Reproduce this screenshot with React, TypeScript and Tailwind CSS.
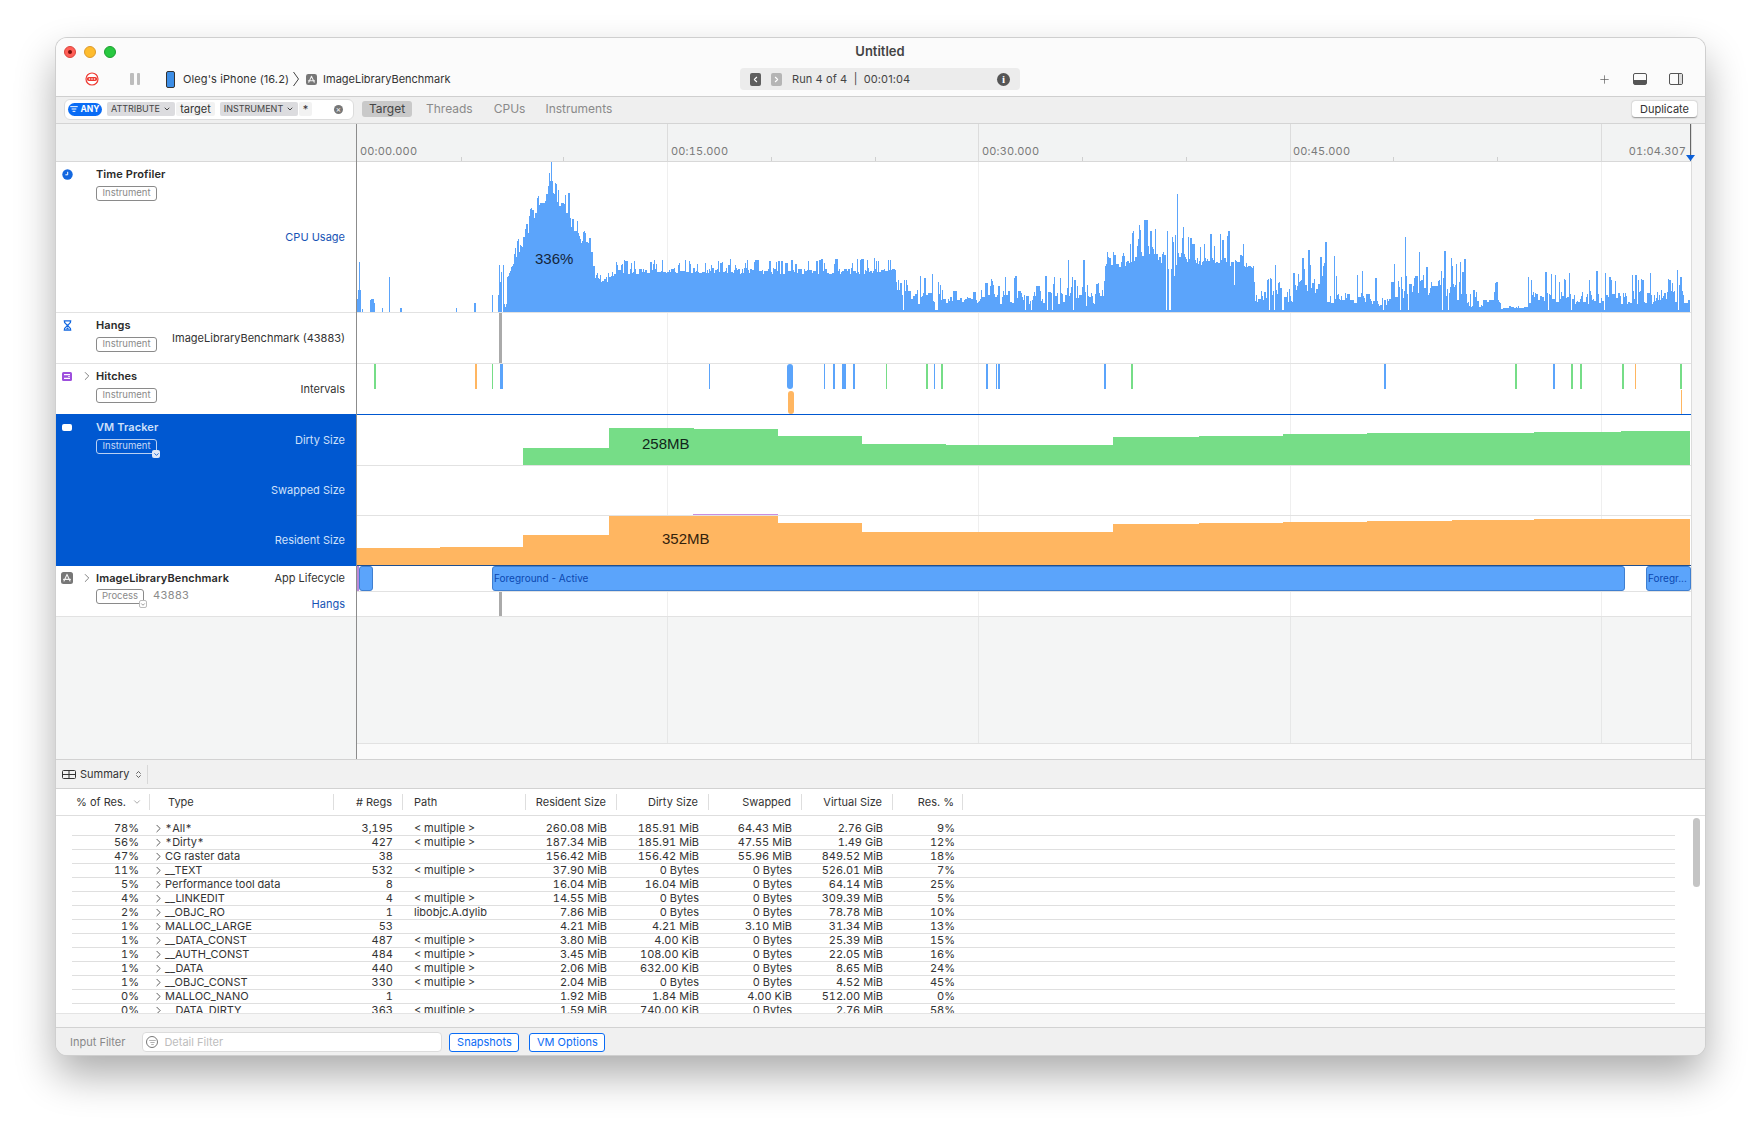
import { ChevronDown, ChevronRight, ChevronLeft, ChevronsUpDown, Plus, ListFilter } from "lucide-react";

type Row = [string, string, string, string, string, string, string, string, string];

const ROWS: Row[] = [
  ["78%", "*All*", "3,195", "< multiple >", "260.08 MiB", "185.91 MiB", "64.43 MiB", "2.76 GiB", "9%"],
  ["56%", "*Dirty*", "427", "< multiple >", "187.34 MiB", "185.91 MiB", "47.55 MiB", "1.49 GiB", "12%"],
  ["47%", "CG raster data", "38", "", "156.42 MiB", "156.42 MiB", "55.96 MiB", "849.52 MiB", "18%"],
  ["11%", "__TEXT", "532", "< multiple >", "37.90 MiB", "0 Bytes", "0 Bytes", "526.01 MiB", "7%"],
  ["5%", "Performance tool data", "8", "", "16.04 MiB", "16.04 MiB", "0 Bytes", "64.14 MiB", "25%"],
  ["4%", "__LINKEDIT", "4", "< multiple >", "14.55 MiB", "0 Bytes", "0 Bytes", "309.39 MiB", "5%"],
  ["2%", "__OBJC_RO", "1", "libobjc.A.dylib", "7.86 MiB", "0 Bytes", "0 Bytes", "78.78 MiB", "10%"],
  ["1%", "MALLOC_LARGE", "53", "", "4.21 MiB", "4.21 MiB", "3.10 MiB", "31.34 MiB", "13%"],
  ["1%", "__DATA_CONST", "487", "< multiple >", "3.80 MiB", "4.00 KiB", "0 Bytes", "25.39 MiB", "15%"],
  ["1%", "__AUTH_CONST", "484", "< multiple >", "3.45 MiB", "108.00 KiB", "0 Bytes", "22.05 MiB", "16%"],
  ["1%", "__DATA", "440", "< multiple >", "2.06 MiB", "632.00 KiB", "0 Bytes", "8.65 MiB", "24%"],
  ["1%", "__OBJC_CONST", "330", "< multiple >", "2.04 MiB", "0 Bytes", "0 Bytes", "4.52 MiB", "45%"],
  ["0%", "MALLOC_NANO", "1", "", "1.92 MiB", "1.84 MiB", "4.00 KiB", "512.00 MiB", "0%"],
  ["0%", "__DATA_DIRTY", "363", "< multiple >", "1.59 MiB", "740.00 KiB", "0 Bytes", "2.76 MiB", "58%"],
];

const GRAPH_X = 357;
const GRAPH_W = 1334;

// x, normal height, spike height (absolute page x)
const CPU_ENVELOPE: [number, number, number][] = [
  [507, 38, 50], [512, 48, 55], [518, 65, 75], [526, 80, 90], [532, 95, 110], [537, 115, 130],
  [545, 125, 137], [551, 130, 150], [558, 118, 128], [568, 108, 122], [574, 85, 100], [583, 70, 82],
  [590, 68, 82], [594, 40, 60], [595, 38, 42], [606, 28, 36], [610, 38, 45], [618, 43, 52],
  [895, 43, 54], [896, 17, 38], [950, 17, 38], [1061, 17, 36], [1066, 28, 52], [1083, 32, 54],
  [1086, 12, 28], [1103, 16, 30], [1105, 50, 60], [1125, 50, 62], [1135, 54, 90], [1151, 68, 97],
  [1163, 52, 85], [1177, 62, 100], [1190, 54, 75], [1241, 52, 87], [1253, 48, 60], [1255, 16, 28],
  [1265, 20, 42], [1284, 25, 55], [1289, 20, 45], [1300, 32, 44], [1305, 42, 70], [1326, 38, 70],
  [1327, 10, 14], [1333, 17, 60], [1367, 15, 50], [1372, 10, 50], [1392, 12, 52], [1393, 26, 58],
  [1405, 30, 68], [1464, 26, 58], [1466, 9, 22], [1493, 10, 24], [1495, 30, 38], [1498, 10, 22],
  [1503, 4, 6], [1525, 4, 6], [1527, 16, 42], [1690, 17, 42],
];

const CPU_FIXED: [number, number][] = [
  [357, 13], [358, 22], [359, 50], [360, 22], [362, 3], [370, 12], [371, 13], [372, 13], [373, 13], [374, 9],
  [382, 4], [389, 35], [400, 4], [401, 4], [456, 4], [474, 9], [475, 9], [492, 17], [498, 17], [499, 47],
  [500, 30], [501, 40], [503, 47], [504, 8], [505, 5], [506, 8],
  [551, 150], [1177, 118], [1405, 75],
];

function cpuPath() {
  let seed = 4321;
  const rnd = () => {
    seed = (seed * 1664525 + 1013904223) % 4294967296;
    return seed / 4294967296;
  };
  const heights: number[] = new Array(GRAPH_W).fill(0);
  for (let x = 507; x < 1690; x++) {
    const i = CPU_ENVELOPE.findIndex((p) => p[0] > x);
    const b = CPU_ENVELOPE[Math.max(i, 1)];
    const a = CPU_ENVELOPE[Math.max(i, 1) - 1];
    const t = Math.min(1, (x - a[0]) / (b[0] - a[0]));
    const base = a[1] + (b[1] - a[1]) * t;
    const spike = a[2] + (b[2] - a[2]) * t;
    const noisy = spike > base * 1.6;
    if (rnd() < 0.25 && x > 507) {
      heights[x - GRAPH_X] = heights[x - GRAPH_X - 1];
      continue;
    }
    let h = base * (noisy ? 0.45 + 0.85 * rnd() : 0.88 + 0.14 * rnd());
    const r = rnd();
    if (r < (noisy ? 0.2 : 0.3)) h = base + (spike - base) * (0.4 + 0.6 * rnd());
    if (noisy && r > 0.95) h = 2;
    heights[x - GRAPH_X] = h;
  }
  CPU_FIXED.forEach(([x, h]) => {
    heights[x - GRAPH_X] = h;
  });
  return heights
    .map((h, i) => (h > 0 ? `M${i} 150V${(150 - h).toFixed(0)}H${i + 1}V150Z` : ""))
    .join("");
}

function stepPath(steps: [number, number][], top: number, bottom: number) {
  let d = `M${steps[0][0] - GRAPH_X} ${bottom - top}`;
  steps.forEach(([x, y], i) => {
    const next = i + 1 < steps.length ? steps[i + 1][0] : GRAPH_X + GRAPH_W - 1;
    d += `V${y - top}H${next - GRAPH_X}`;
  });
  return d + `V${bottom - top}Z`;
}

const DIRTY: [number, number][] = [
  [523, 448], [609, 428], [694, 429], [778, 436], [862, 444], [946, 445], [1113, 437],
  [1199, 436], [1283, 434], [1367, 433], [1534, 432], [1621, 431],
];
const RESIDENT: [number, number][] = [
  [357, 548], [440, 547], [523, 535], [609, 516], [778, 523], [862, 532], [1113, 524],
  [1199, 523], [1283, 522], [1367, 521], [1452, 520], [1534, 519],
];

const BLUE = "#5ba4fb";
const GREEN = "#76dd87";
const ORANGE = "#ffb661";

// x, width, colour
const HITCHES: [number, number, string][] = [
  [374, 2, GREEN], [475, 2, ORANGE], [492, 1, GREEN], [500, 3, BLUE], [709, 1, BLUE],
  [824, 1, BLUE], [833, 2, BLUE], [842, 4, BLUE], [853, 2, BLUE], [886, 1, GREEN], [926, 2, GREEN],
  [934, 1, BLUE], [941, 2, GREEN], [986, 2, BLUE], [996, 1, BLUE], [998, 2, BLUE], [1104, 2, BLUE],
  [1131, 2, GREEN], [1384, 2, BLUE], [1515, 2, GREEN], [1553, 2, BLUE], [1571, 2, GREEN],
  [1580, 2, GREEN], [1622, 2, GREEN], [1635, 1, ORANGE], [1680, 2, GREEN],
];

const GRID_LINES = [667, 978, 1290, 1601];
const MINOR_TICKS = [461, 563, 771, 875, 1082, 1186, 1393, 1497];
const RULER_LABELS: [number, string][] = [
  [360, "00:00.000"], [671, "00:15.000"], [982, "00:30.000"], [1293, "00:45.000"],
];

function AppGlyph({ size = 12 }: { size?: number }) {
  return (
    <svg width={size} height={size} viewBox="0 0 12 12">
      <rect width="12" height="12" rx="2.5" fill="#777" />
      <path d="M6 2.4 3 9M6 2.4 9 9M2.6 7.4h6.8" stroke="#f2f2f2" strokeWidth="1.1" fill="none" strokeLinecap="round" />
    </svg>
  );
}

function Badge({ label, w, selected, menu }: { label: string; w: string; selected?: boolean; menu?: boolean }) {
  return (
    <div
      className={`relative flex h-[15px] items-center justify-center rounded-[3px] border text-[9.5px] ${w} ${
        selected ? "border-[#b9d0f2] text-[#c8daf6]" : "border-[#8a8a8a] text-[#8a8a8a]"
      }`}
    >
      {label}
      {menu && (
        <span
          className={`absolute -bottom-[5px] -right-[4px] flex h-[8px] w-[8px] items-center justify-center rounded-[2px] ${
            selected ? "bg-[#dfe8f7] text-[#0058d1]" : "border border-[#bbb] bg-white text-[#777]"
          }`}
        >
          <ChevronDown size={7} strokeWidth={3} />
        </span>
      )}
    </div>
  );
}

function TrackHead({
  icon,
  title,
  badge,
  badgeW,
  selected,
  chevron,
  menu,
  note,
}: {
  icon: React.ReactNode;
  title: string;
  badge: string;
  badgeW: string;
  selected?: boolean;
  chevron?: boolean;
  menu?: boolean;
  note?: string;
}) {
  return (
    <div className={`flex ${selected ? "pt-px" : ""}`}>
      <div className="flex h-[24px] w-[22px] items-center justify-center">{icon}</div>
      <div className={`flex h-[24px] w-[18px] items-center justify-center ${selected ? "text-white" : "text-[#666]"}`}>
        {chevron && <ChevronRight size={14} strokeWidth={1.4} />}
      </div>
      <div className="flex flex-col">
        <div className={`flex h-[24px] items-center text-[11px] font-semibold tracking-[0.1px] ${selected ? "text-[#cfe0fa]" : "text-[#2a2a2a]"}`}>
          {title}
        </div>
        <div className={`flex items-center gap-[9px] ${note ? "-mt-px" : ""}`}>
          <Badge label={badge} w={badgeW} selected={selected} menu={menu} />
          {note && <span className="-mt-[2px] text-[11px] tracking-[0.4px] text-[#8a8a8a]">{note}</span>}
        </div>
      </div>
    </div>
  );
}

function Track({ heightClass, className, children }: { heightClass: string; className?: string; children: React.ReactNode }) {
  return <div className={`relative shrink-0 ${heightClass} ${className ?? ""}`}>{children}</div>;
}

function RightLabel({ text, className }: { text: string; className: string }) {
  return <div className={`absolute right-[11px] text-[11px] leading-[14px] ${className}`}>{text}</div>;
}

function Sidebar() {
  return (
    <div className="flex w-[301px] shrink-0 flex-col border-r border-[#8c8c8c] bg-[#f4f5f5]">
      <div className="h-[38px] shrink-0 border-b border-[#d8d8d8] bg-[#f2f3f3]" />
      <Track heightClass="h-[151px]" className="border-b border-[#e2e2e2] bg-white">
        <TrackHead
          icon={
            <svg width="11" height="11" viewBox="0 0 11 11">
              <circle cx="5.5" cy="5.5" r="5.2" fill="#1468e0" />
              <path d="M5.7 2.8v3H3.4" stroke="#fff" strokeWidth="1" fill="none" />
            </svg>
          }
          title="Time Profiler"
          badge="Instrument"
          badgeW="w-[61px]"
        />
        <RightLabel text="CPU Usage" className="top-[68px] text-[#1653b5]" />
      </Track>
      <Track heightClass="h-[51px]" className="border-b border-[#e2e2e2] bg-white">
        <TrackHead
          icon={
            <svg width="9" height="11" viewBox="0 0 9 11">
              <path d="M.7.8h7.6M.7 10.2h7.6M1.6 1v1.6L4.5 5.5 1.6 8.4V10M7.4 1v1.6L4.5 5.5l2.9 2.9V10" stroke="#1468e0" strokeWidth="1.3" fill="none" />
              <path d="M2.6 9.4 4.5 7.2l1.9 2.2z" fill="#1468e0" />
            </svg>
          }
          title="Hangs"
          badge="Instrument"
          badgeW="w-[61px]"
        />
        <RightLabel text="ImageLibraryBenchmark (43883)" className="top-[18px] text-[#333]" />
      </Track>
      <Track heightClass="h-[50px]" className="bg-white">
        <TrackHead
          icon={
            <svg width="10" height="9" viewBox="0 0 10 9">
              <rect width="10" height="9" rx="1.5" fill="#9d4edd" />
              <path d="M2 2.6h6M8 6.4H2" stroke="#fff" strokeWidth="1.2" />
              <path d="M6 4.5h2" stroke="#e6d0f7" strokeWidth="1" />
            </svg>
          }
          title="Hitches"
          badge="Instrument"
          badgeW="w-[61px]"
          chevron
        />
        <RightLabel text="Intervals" className="top-[18px] text-[#333]" />
      </Track>
      <Track heightClass="h-[152px]" className="bg-[#0058d1]">
        <TrackHead
          icon={<div className="h-[7px] w-[10px] rounded-[2px] bg-white" />}
          title="VM Tracker"
          badge="Instrument"
          badgeW="w-[61px]"
          selected
          menu
        />
        <RightLabel text="Dirty Size" className="top-[19px] text-[#cfe0fa]" />
        <RightLabel text="Swapped Size" className="top-[69px] text-[#cfe0fa]" />
        <RightLabel text="Resident Size" className="top-[119px] text-[#cfe0fa]" />
      </Track>
      <Track heightClass="h-[51px]" className="border-b border-[#e2e2e2] bg-white">
        <TrackHead
          icon={<AppGlyph />}
          title="ImageLibraryBenchmark"
          badge="Process"
          badgeW="w-[48px]"
          chevron
          menu
          note="43883"
        />
        <RightLabel text="App Lifecycle" className="top-[5px] text-[#333]" />
        <RightLabel text="Hangs" className="top-[31px] text-[#1653b5]" />
      </Track>
      <div className="flex-1" />
    </div>
  );
}

function Ruler() {
  return (
    <div className="relative h-[38px] shrink-0 border-b border-[#d8d8d8] bg-[#f2f3f3] text-[11px] tracking-[0.15px] text-[#7a7a7a] [font-variant-numeric:tabular-nums]">
      {GRID_LINES.map((x) => (
        <div key={x} className="absolute top-0 h-full w-px bg-[#dcdcdc]" style={{ left: x - GRAPH_X }} />
      ))}
      {MINOR_TICKS.map((x) => (
        <div key={x} className="absolute bottom-0 h-[4px] w-px bg-[#cfcfcf]" style={{ left: x - GRAPH_X }} />
      ))}
      {RULER_LABELS.map(([x, t]) => (
        <span key={t} className="absolute top-[20px] leading-[14px]" style={{ left: x - GRAPH_X }}>
          {t}
        </span>
      ))}
      <span className="absolute right-[5px] top-[20px] leading-[14px]">01:04.307</span>
      <div className="absolute right-0 top-0 h-full w-px bg-[#666]" />
      <svg width="9" height="6" viewBox="0 0 9 6" className="absolute -right-[4px] bottom-0">
        <path d="M0 0h9L4.5 6z" fill="#0a5fd8" />
      </svg>
    </div>
  );
}

function GridSvg({ h, color = "#efefef" }: { h: number; color?: string }) {
  return (
    <svg width={GRAPH_W} height={h} className="absolute left-0 top-0" shapeRendering="crispEdges">
      {GRID_LINES.map((x) => (
        <rect key={x} x={x - GRAPH_X} y="0" width="1" height={h} fill={color} />
      ))}
    </svg>
  );
}

function Graph() {
  const w = GRAPH_W;
  return (
    <div className="relative flex w-[1335px] shrink-0 flex-col border-r border-[#dcdcdc] bg-[#fafafa]">
      <Ruler />
      {/* chart tracks */}
      <div className="relative h-[151px] shrink-0 border-b border-[#e2e2e2] bg-white">
        <svg width={w} height={150} className="absolute left-0 top-0" shapeRendering="crispEdges">
          {GRID_LINES.map((x) => (
            <rect key={x} x={x - GRAPH_X} y="0" width="1" height="150" fill="#efefef" />
          ))}
          <path d={cpuPath()} fill={BLUE} />
        </svg>
        <span className="absolute left-[178px] top-[88px] font-[Liberation_Sans,sans-serif] text-[15px] leading-[18px] text-[#14263c]">336%</span>
      </div>
      <div className="relative h-[51px] shrink-0 border-b border-[#e2e2e2] bg-white">
        <GridSvg h={50} />
        <div className="absolute left-[142px] top-0 h-[50px] w-[3px] bg-[#aaaaaa]" />
      </div>
      <div className="relative h-[50px] shrink-0 bg-white">
        <GridSvg h={50} />
        {HITCHES.map(([x, wd, c]) => (
          <div key={x} className="absolute top-0 h-[25px]" style={{ left: x - GRAPH_X, width: wd, background: c }} />
        ))}
        <div className="absolute left-[430px] top-0 h-[25px] w-[6px] rounded-[3px] bg-[#5ba4fb]" />
        <div className="absolute left-[431px] top-[27px] h-[23px] w-[6px] rounded-[3px] bg-[#ffb661]" />
        <div className="absolute left-[1324px] top-[26px] h-[24px] w-px bg-[#ffb661]" />
      </div>
      <div className="relative h-[152px] shrink-0 border-y border-b-[#1f4f8f] border-t-[#0058d1] bg-white">
        <div className="relative h-[51px] border-b border-[#e2e2e2]">
          <svg width={w} height={50} className="absolute left-0 top-0" shapeRendering="crispEdges">
            {GRID_LINES.map((x) => (
              <rect key={x} x={x - GRAPH_X} y="0" width="1" height="50" fill="#efefef" />
            ))}
            <path d={stepPath(DIRTY, 415, 465)} fill={GREEN} />
          </svg>
          <span className="absolute left-[285px] top-[20px] font-[Liberation_Sans,sans-serif] text-[15px] leading-[18px] text-[#10261a]">258MB</span>
        </div>
        <div className="relative h-[50px] border-b border-[#e2e2e2]">
          <svg width={w} height={49} className="absolute left-0 top-0" shapeRendering="crispEdges">
            {GRID_LINES.map((x) => (
              <rect key={x} x={x - GRAPH_X} y="0" width="1" height="49" fill="#efefef" />
            ))}
            <rect x={693 - GRAPH_X} y="48" width="85" height="1" fill="#c98ee0" />
          </svg>
        </div>
        <div className="relative h-[49px]">
          <svg width={w} height={49} className="absolute left-0 top-0" shapeRendering="crispEdges">
            {GRID_LINES.map((x) => (
              <rect key={x} x={x - GRAPH_X} y="0" width="1" height="49" fill="#efefef" />
            ))}
            <path d={stepPath(RESIDENT, 516, 565)} fill={ORANGE} />
          </svg>
          <span className="absolute left-[305px] top-[14px] font-[Liberation_Sans,sans-serif] text-[15px] leading-[18px] text-[#33220c]">352MB</span>
        </div>
      </div>
      <div className="relative h-[51px] shrink-0 border-b border-[#e2e2e2] bg-white">
        <GridSvg h={50} />
        <div className="absolute inset-x-0 top-[25px] h-px bg-[#e2e2e2]" />
        <div className="absolute left-0 top-0 h-[25px] w-[2px] bg-[#b98ad8]" />
        <div className="absolute left-[2px] top-0 h-[25px] w-[14px] rounded-[3px] border border-[#3f7fd0] bg-[#5ba4fb]" />
        <div className="absolute left-[135px] top-0 flex h-[25px] w-[1133px] items-center overflow-hidden rounded-[3px] border border-[#3f7fd0] bg-[#5ba4fb] pl-px text-[10px] text-[#0b48b0]">
          Foreground - Active
        </div>
        <div className="absolute left-[1289px] top-0 flex h-[25px] w-[45px] items-center overflow-hidden rounded-[3px] border border-[#3f7fd0] bg-[#5ba4fb] pl-px text-[10px] text-[#0b48b0]">
          Foregr...
        </div>
        <div className="absolute left-[142px] top-[26px] h-[24px] w-[3px] bg-[#aaaaaa]" />
      </div>
      <div className="relative h-[127px] shrink-0 border-b border-[#e2e2e2] bg-[#f4f5f5]">
        <GridSvg h={126} color="#e6e7e7" />
      </div>
      <div className="flex-1 bg-[#fafafa]" />
    </div>
  );
}

function Toolbar() {
  return (
    <div className="h-[59px] shrink-0 border-b border-[#cfcfcf] bg-[#fbfbfb]">
      <div className="relative flex h-[28px] items-center">
        <div className="ml-[8px] flex items-center gap-[8px]">
          <span className="flex h-[12px] w-[12px] items-center justify-center rounded-full border border-[#d9453c] bg-[#ff5f57]">
            <span className="h-[4px] w-[4px] rounded-full bg-[#7a0f0a]" />
          </span>
          <span className="h-[12px] w-[12px] rounded-full border border-[#dc9a2c] bg-[#febc2e]" />
          <span className="h-[12px] w-[12px] rounded-full border border-[#1e9e30] bg-[#28c840]" />
        </div>
        <div className="absolute inset-x-0 top-[5px] -ml-[1px] text-center text-[13px] font-semibold leading-[16px] text-[#444]">Untitled</div>
      </div>
      <div className="flex h-[26px] items-center">
        <div className="ml-[29px] flex w-[14px] justify-center">
          <svg width="14" height="14" viewBox="0 0 14 14">
            <circle cx="7" cy="7" r="6" fill="#fff" stroke="#ee3b33" strokeWidth="1.2" />
            <rect x="1.8" y="5" width="10.4" height="4" rx="2" fill="#ee3b33" />
            <circle cx="4.5" cy="7" r=".8" fill="#fff" />
            <circle cx="7" cy="7" r=".8" fill="#fff" />
            <circle cx="9.5" cy="7" r=".8" fill="#fff" />
          </svg>
        </div>
        <div className="ml-[31px] flex w-[10px] justify-between">
          <span className="h-[12px] w-[3.5px] rounded-[1px] bg-[#bdbdbd]" />
          <span className="h-[12px] w-[3.5px] rounded-[1px] bg-[#bdbdbd]" />
        </div>
        <div className="ml-[26px] flex w-[574px] shrink-0 items-center">
          <div className="h-[17px] w-[9px] rounded-[2px] border-[1.5px] border-[#333] bg-[#3d8ee6]" />
          <span className="ml-[8px] text-[11px] tracking-[0.1px] text-[#333]">Oleg's iPhone (16.2)</span>
          <svg width="8" height="18" viewBox="0 0 8 18" className="ml-[3px]">
            <path d="M1.5 2 6.5 9l-5 7" stroke="#444" strokeWidth="1" fill="none" />
          </svg>
          <span className="ml-[6px]">
            <AppGlyph size={11} />
          </span>
          <span className="ml-[6px] text-[11px] text-[#333]">ImageLibraryBenchmark</span>
        </div>
        <div className="flex h-[22px] w-[280px] items-center rounded-[4px] bg-[#ececec] text-[11px] tracking-[0.1px] text-[#444]">
          <span className="ml-[10px] flex h-[13px] w-[11px] items-center justify-center rounded-[2px] bg-[#5f5f5f] text-white">
            <ChevronLeft size={9} strokeWidth={3} />
          </span>
          <span className="ml-[10px] flex h-[13px] w-[11px] items-center justify-center rounded-[2px] bg-[#b5b5b5] text-white">
            <ChevronRight size={9} strokeWidth={3} />
          </span>
          <span className="ml-[10px] mt-px whitespace-pre">Run 4 of 4  |  00:01:04</span>
          <span className="ml-auto mr-[10px] flex h-[13px] w-[13px] items-center justify-center rounded-full bg-[#555] font-[Liberation_Serif,serif] text-[11px] font-bold text-white">
            i
          </span>
        </div>
        <div className="ml-auto mr-[22px] flex items-center text-[#555]">
          <Plus size={13} strokeWidth={1.25} />
          <div className="ml-[22px] flex h-[12px] w-[14px] items-end rounded-[2px] border border-[#555]">
            <div className="h-[4px] w-full bg-[#555]" />
          </div>
          <div className="ml-[22px] flex h-[12px] w-[14px] justify-end rounded-[2px] border border-[#555]">
            <div className="h-full w-[4px] border-l border-[#555] bg-[#ddd]" />
          </div>
        </div>
      </div>
    </div>
  );
}

function FilterBar() {
  return (
    <div className="flex h-[27px] shrink-0 items-center border-b border-[#d4d4d4] bg-[#efefef] pb-[2px]">
      <div className="ml-[8px] flex h-[21px] w-[290px] items-center rounded-[6px] border border-[#dcdcdc] bg-white pl-[3px]">
        <span className="flex h-[13px] w-[34px] items-center justify-center gap-[2px] rounded-full bg-[#0a6cf5] text-[8.5px] font-bold text-white">
          <ListFilter size={8} strokeWidth={3} />
          ANY
        </span>
        <span className="ml-[5px] flex h-[14px] w-[68px] items-center justify-center gap-[3px] rounded-[2px] bg-[#dcdcdf] text-[9px] text-[#444]">
          ATTRIBUTE
          <ChevronDown size={8} strokeWidth={3} />
        </span>
        <span className="ml-px flex h-[14px] w-[39px] items-center justify-center rounded-[2px] bg-[#f2f2f2] text-[11px] text-[#333]">target</span>
        <span className="ml-[5px] flex h-[14px] w-[78px] items-center justify-center gap-[3px] rounded-[2px] bg-[#dcdcdf] text-[9px] text-[#444]">
          INSTRUMENT
          <ChevronDown size={8} strokeWidth={3} />
        </span>
        <span className="ml-px flex h-[14px] w-[13px] items-center justify-center rounded-[2px] bg-[#f2f2f2] text-[11px] text-[#333]">*</span>
        <span className="ml-[22px] flex h-[9px] w-[9px] items-center justify-center rounded-full bg-[#777] text-[8px] leading-[8px] text-white">×</span>
      </div>
      <div className="ml-[8px] flex h-[16px] w-[50px] items-center justify-center rounded-[3px] bg-[#c9c9c9] text-[12px] text-[#444]">Target</div>
      <span className="ml-[14px] text-[12px] text-[#8a8a8a]">Threads</span>
      <span className="ml-[21px] text-[12px] text-[#8a8a8a]">CPUs</span>
      <span className="ml-[20px] text-[12px] text-[#8a8a8a]">Instruments</span>
      <div className="ml-auto mr-[8px] flex h-[16px] w-[65px] items-center justify-center rounded-[3px] bg-white text-[11px] text-[#333] shadow-[0_0.5px_1.5px_rgba(0,0,0,0.4)]">Duplicate</div>
    </div>
  );
}

const HEADERS: [string, string][] = [
  ["% of Res.", "pl-[20px]"],
  ["Type", "pl-[18px]"],
  ["# Regs", "justify-end pr-[10px]"],
  ["Path", "pl-[11px]"],
  ["Resident Size", "justify-end pr-[10px]"],
  ["Dirty Size", "justify-end pr-[10px]"],
  ["Swapped", "justify-end pr-[10px]"],
  ["Virtual Size", "justify-end pr-[10px]"],
  ["Res. %", "justify-end pr-[8px]"],
];

function Summary() {
  return (
    <>
      <div className="flex h-[30px] shrink-0 items-center border-y border-[#d2d2d2] bg-[#f1f1f1] text-[11px] text-[#333]">
        <svg width="14" height="9" viewBox="0 0 14 9" className="ml-[6px]">
          <rect x=".5" y=".5" width="13" height="8" rx="1" fill="none" stroke="#333" />
          <path d="M.5 4.5h13M7 .5v8" stroke="#333" />
        </svg>
        <span className="ml-[4px]">Summary</span>
        <ChevronsUpDown size={9} strokeWidth={2.5} className="ml-[4px] text-[#555]" />
        <div className="ml-[4px] h-[19px] w-px bg-[#d8d8d8]" />
      </div>
      <div className="grid h-[27px] shrink-0 grid-cols-[94px_184px_69px_123px_91px_92px_93px_91px_70px] items-center border-b border-[#dedede] bg-white text-[11px] text-[#333]">
        {HEADERS.map(([label, cls], i) => (
          <div key={label} className={`relative flex h-[16px] items-center border-r border-[#dedede] ${cls}`}>
            {label}
            {i === 0 && <ChevronDown size={10} strokeWidth={1.5} className="absolute right-[7px] text-[#777]" />}
          </div>
        ))}
      </div>
      <div className="relative h-[197px] shrink-0 overflow-hidden bg-white pt-[6px] text-[11px] text-[#333] [font-variant-numeric:tabular-nums]">
        {ROWS.map((r) => (
          <div
            key={r[1]}
            className="ml-[16px] grid h-[14px] w-[1603px] grid-cols-[78px_184px_69px_123px_91px_92px_93px_91px_70px] items-center border-b border-[#dfdfdf] leading-[13px]"
          >
            <div className="pr-[11px] text-right">{r[0]}</div>
            <div className="flex items-center pl-[3px]">
              <ChevronRight size={13} strokeWidth={1.6} className="-ml-px text-[#444]" />
              <span>{r[1]}</span>
            </div>
            <div className="pr-[10px] text-right">{r[2]}</div>
            <div className="pl-[11px]">{r[3]}</div>
            <div className="pr-[10px] text-right">{r[4]}</div>
            <div className="pr-[10px] text-right">{r[5]}</div>
            <div className="pr-[10px] text-right">{r[6]}</div>
            <div className="pr-[10px] text-right">{r[7]}</div>
            <div className="pr-[8px] text-right">{r[8]}</div>
          </div>
        ))}
        <div className="absolute right-[5px] top-[2px] h-[69px] w-[7px] rounded-full bg-[#c4c4c4]" />
      </div>
      <div className="h-[14px] shrink-0 border-t border-[#e4e4e4] bg-[#f6f6f6]" />
      <div className="flex h-[28px] shrink-0 items-center border-t border-[#d2d2d2] bg-[#f0f0f0] pt-px text-[11px]">
        <span className="ml-[14px] text-[#888]">Input Filter</span>
        <div className="ml-[17px] flex h-[20px] w-[300px] items-center rounded-[4px] border border-[#dcdcdc] bg-white pl-[3px] text-[#bdbdbd]">
          <span className="flex h-[12px] w-[12px] items-center justify-center rounded-full border border-[#777] text-[#777]">
            <ListFilter size={7} strokeWidth={2} />
          </span>
          <span className="ml-[6px]">Detail Filter</span>
        </div>
        <div className="ml-[7px] flex h-[19px] w-[70px] items-center justify-center rounded-[3px] border border-[#0a6cf5] bg-white text-[#0a6cf5]">Snapshots</div>
        <div className="ml-[10px] flex h-[19px] w-[76px] items-center justify-center rounded-[3px] border border-[#0a6cf5] bg-white text-[#0a6cf5]">VM Options</div>
      </div>
    </>
  );
}

export default function App() {
  return (
    <div className="h-[1129px] overflow-hidden bg-white pl-[56px] pt-[38px] font-[Inter,sans-serif]">
      <div className="flex h-[1017px] w-[1649px] flex-col overflow-hidden rounded-[11px] bg-[#f5f5f5] shadow-[0_0_0_1px_#cfcfcf,0_20px_40px_rgba(0,0,0,0.33)]">
        <Toolbar />
        <FilterBar />
        <div className="flex h-[635px] shrink-0">
          <Sidebar />
          <Graph />
        </div>
        <Summary />
      </div>
    </div>
  );
}
